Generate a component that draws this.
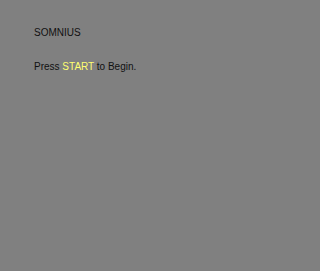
import React from "react"

const App = () => {
  return (
    <div className="min-h-screen w-full bg-[#808080] pl-[34px] pt-[28px] font-['Liberation_Sans',Arial,sans-serif] text-[10px] leading-[10px] text-[#111]">
      <div>SOMNIUS</div>
      <div className="mt-[24px]">
        Press <span className="text-[#ffff70]">START</span> to Begin.
      </div>
    </div>
  )
}

export default App
